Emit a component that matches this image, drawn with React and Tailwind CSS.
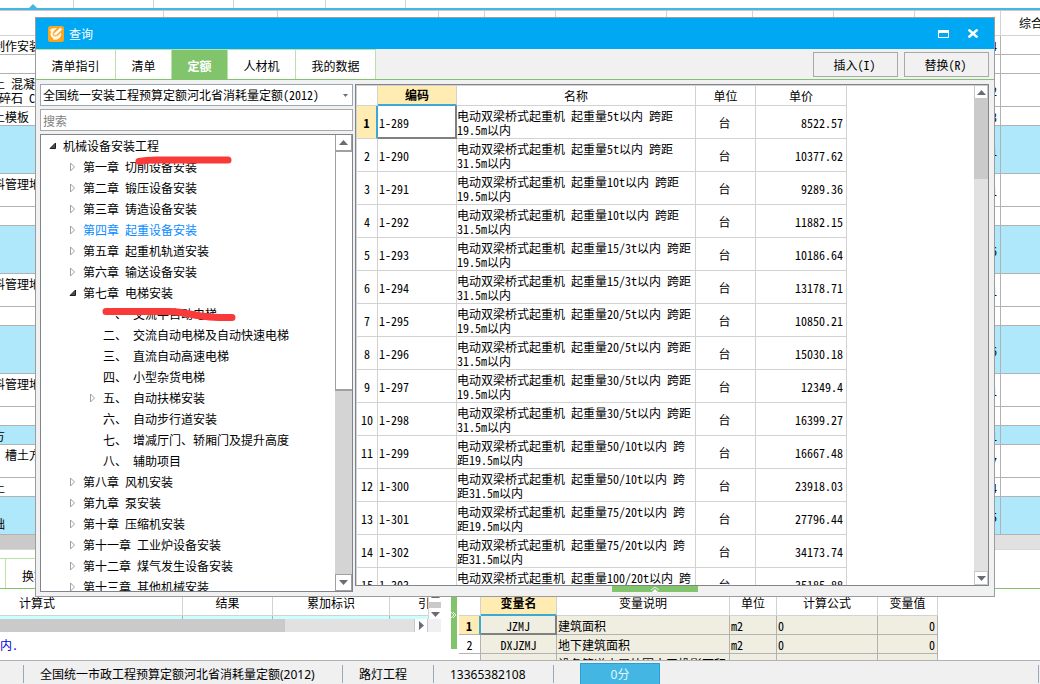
import { useState } from 'react';
import clsx from 'clsx';

const toolColumns = ['w-[74px]', 'w-20', 'w-20', 'w-[92px]', 'w-20'];

const sheetColumns = [
  'w-[164px]',
  'w-[114px]',
  'w-[161px]',
  'w-[46px]',
  'w-[71px]',
  'w-[111px]',
  'w-[86px]',
  'w-[81px]',
  'w-[81px]',
  'w-[86px]',
];

const sheetRows = [
  { height: 'h-[19px]', name: '制作安装', price: '4' },
  { height: 'h-[19px]', name: '', price: '' },
  { height: 'h-[33px]', name: '土 混凝\n 碎石 C', price: '2' },
  { height: 'h-[19px]', name: '土模板', price: '3' },
  { height: 'h-12', name: '', price: '1', marked: true },
  { height: 'h-[33px]', name: '料管理地\n ', price: '1' },
  { height: 'h-[19px]', name: '', price: '' },
  { height: 'h-12', name: '', price: '6', marked: true },
  { height: 'h-[33px]', name: '料管理地\n ', price: '1' },
  { height: 'h-[19px]', name: '', price: '' },
  { height: 'h-12', name: '', price: '6', marked: true },
  { height: 'h-[33px]', name: '料管理地\n ', price: '1' },
  { height: 'h-[19px]', name: '', price: '' },
  { height: 'h-[19px]', name: '方', price: '1', marked: true },
  { height: 'h-[33px]', name: '  槽土方\n ', price: '7' },
  { height: 'h-[19px]', name: '土', price: '4' },
  { height: 'h-[38px]', name: '\n础', price: '5', marked: true },
];

const tabs = [
  { label: '清单指引', width: 'w-20' },
  { label: '清单', width: 'w-14' },
  { label: '定额', width: 'w-14' },
  { label: '人材机', width: 'w-[68px]' },
  { label: '我的数据', width: 'w-20' },
];

const treeItems = [
  { label: '机械设备安装工程', level: 0, state: 'open' },
  { label: '第一章 切削设备安装', level: 1, state: 'closed' },
  { label: '第二章 锻压设备安装', level: 1, state: 'closed' },
  { label: '第三章 铸造设备安装', level: 1, state: 'closed' },
  { label: '第四章 起重设备安装', level: 1, state: 'closed' },
  { label: '第五章 起重机轨道安装', level: 1, state: 'closed' },
  { label: '第六章 输送设备安装', level: 1, state: 'closed' },
  { label: '第七章 电梯安装', level: 1, state: 'open' },
  { label: '一、 交流半自动电梯', level: 2 },
  { label: '二、 交流自动电梯及自动快速电梯', level: 2 },
  { label: '三、 直流自动高速电梯', level: 2 },
  { label: '四、 小型杂货电梯', level: 2 },
  { label: '五、 自动扶梯安装', level: 2, state: 'closed' },
  { label: '六、 自动步行道安装', level: 2 },
  { label: '七、 增减厅门、轿厢门及提升高度', level: 2 },
  { label: '八、 辅助项目', level: 2 },
  { label: '第八章 风机安装', level: 1, state: 'closed' },
  { label: '第九章 泵安装', level: 1, state: 'closed' },
  { label: '第十章 压缩机安装', level: 1, state: 'closed' },
  { label: '第十一章 工业炉设备安装', level: 1, state: 'closed' },
  { label: '第十二章 煤气发生设备安装', level: 1, state: 'closed' },
  { label: '第十三章 其他机械安装', level: 1, state: 'closed' },
];

const treeIndent = ['pl-2', 'pl-7', 'pl-12'];

const quotas = [
  { code: '1-289', name: '电动双梁桥式起重机 起重量5t以内 跨距\n19.5m以内', price: '8522.57' },
  { code: '1-290', name: '电动双梁桥式起重机 起重量5t以内 跨距\n31.5m以内', price: '10377.62' },
  { code: '1-291', name: '电动双梁桥式起重机 起重量10t以内 跨距\n19.5m以内', price: '9289.36' },
  { code: '1-292', name: '电动双梁桥式起重机 起重量10t以内 跨距\n31.5m以内', price: '11882.15' },
  { code: '1-293', name: '电动双梁桥式起重机 起重量15/3t以内 跨距\n19.5m以内', price: '10186.64' },
  { code: '1-294', name: '电动双梁桥式起重机 起重量15/3t以内 跨距\n31.5m以内', price: '13178.71' },
  { code: '1-295', name: '电动双梁桥式起重机 起重量20/5t以内 跨距\n19.5m以内', price: '10850.21' },
  { code: '1-296', name: '电动双梁桥式起重机 起重量20/5t以内 跨距\n31.5m以内', price: '15030.18' },
  { code: '1-297', name: '电动双梁桥式起重机 起重量30/5t以内 跨距\n19.5m以内', price: '12349.4' },
  { code: '1-298', name: '电动双梁桥式起重机 起重量30/5t以内 跨距\n31.5m以内', price: '16399.27' },
  { code: '1-299', name: '电动双梁桥式起重机 起重量50/10t以内 跨\n距19.5m以内', price: '16667.48' },
  { code: '1-300', name: '电动双梁桥式起重机 起重量50/10t以内 跨\n距31.5m以内', price: '23918.03' },
  { code: '1-301', name: '电动双梁桥式起重机 起重量75/20t以内 跨\n距19.5m以内', price: '27796.44' },
  { code: '1-302', name: '电动双梁桥式起重机 起重量75/20t以内 跨\n距31.5m以内', price: '34173.74' },
  { code: '1-303', name: '电动双梁桥式起重机 起重量100/20t以内 跨\n距19.5m以内', price: '35185.88' },
];

const variables = [
  { name: 'JZMJ', note: '建筑面积', unit: 'm2', formula: '0', value: '0' },
  { name: 'DXJZMJ', note: '地下建筑面积', unit: 'm2', formula: '0', value: '0' },
  { name: '', note: '设备管道夹层外围水平投影面积', unit: '', formula: '', value: '' },
];

function Arrow({ up, className = 'w-[9px] h-[5px]' }) {
  return (
    <svg viewBox="0 0 9 5" className={clsx('fill-[#6b6b78]', className)}>
      <path d={up ? 'M0 5 L4.5 0 L9 5 Z' : 'M0 0 L9 0 L4.5 5 Z'} />
    </svg>
  );
}

function TreeArrow({ state }) {
  if (state === 'open') {
    return (
      <svg viewBox="0 0 8 8" className="w-2 h-2">
        <path d="M6.5 1 V6.5 H1 Z" fill="#505050" stroke="#1e1e1e" />
      </svg>
    );
  }
  return (
    <svg viewBox="0 0 8 10" className="w-2 h-2.5">
      {state === 'closed' && <path d="M1.5 1 V9 L5.5 5 Z" fill="#fff" stroke="#a0a0a0" />}
    </svg>
  );
}

function AppIcon() {
  return (
    <svg viewBox="0 0 16 16" className="w-4 h-4">
      <rect width="16" height="16" rx="2.5" fill="#fba51c" />
      <path
        d="M1.5 4 Q4 1.5 9 2 L6 5 L4.5 8 L7 10.5 L10 9.5 L13 6.5 Q14 10 11 12.5 Q8 14.5 5 13.5 Q6 12.5 4 11.5 Q1.5 9 3 6 Q2.5 4.5 1.5 4 Z"
        fill="#fff6e2"
      />
      <path d="M5.5 9.8 L6 7.2 L12.2 1.4 L14.4 3.6 L8.2 9.4 Z" fill="#fff" stroke="#f5a93a" strokeWidth="0.7" />
    </svg>
  );
}

function Sheet() {
  return (
    <table className="w-full table-fixed border-separate border-spacing-0 whitespace-pre leading-[14px]">
      <colgroup>
        {sheetColumns.map((width, index) => (
          <col key={index} className={width} />
        ))}
        <col />
      </colgroup>
      <thead>
        <tr className="h-[25px]">
          {sheetColumns.map((width, index) => (
            <th key={index} className="p-0 border-r border-b border-[#d2d2d2]"></th>
          ))}
          <th className="p-0 pl-[18px] text-left font-normal border-b border-[#d2d2d2] overflow-hidden">综合单价</th>
        </tr>
      </thead>
      <tbody>
        {sheetRows.map((row, index) => (
          <tr key={index} className={clsx(row.height, row.marked && 'bg-[#aee8fa]')}>
            <td className="p-0 pt-0.5 border-b border-[#b2b2b2] overflow-hidden">
              <div className="-ml-[7px]">{row.name}</div>
            </td>
            <td colSpan={8} className="p-0 border-b border-[#b2b2b2]"></td>
            <td className="p-0 pt-0.5 pr-[3px] text-right border-r border-b border-[#b2b2b2]">{row.price}</td>
            <td className="p-0 border-b border-[#b2b2b2]"></td>
          </tr>
        ))}
      </tbody>
    </table>
  );
}

function QuotaTree() {
  const [selected, setSelected] = useState('第四章 起重设备安装');

  return (
    <div className="flex-1 min-h-0 flex bg-white border border-[#80848c]">
      <ul className="flex-1 min-w-0 overflow-hidden">
        {treeItems.map((item) => (
          <li key={item.label}>
            <button
              className={clsx(
                'w-full h-[21px] flex items-center gap-1.5 whitespace-pre',
                treeIndent[item.level],
                item.label === selected && 'text-[#0a8cff]'
              )}
              onClick={() => setSelected(item.label)}
            >
              <TreeArrow state={item.state} />
              {item.label}
            </button>
          </li>
        ))}
      </ul>
      <div className="w-[17px] flex flex-col bg-[#d4d4d4]">
        <div className="h-[17px] flex items-center justify-center bg-white border border-t-0 border-b-2 border-[#a0a0a0]">
          <Arrow up />
        </div>
        <div className="h-[239px] bg-white border-l border-b-2 border-[#a0a0a0]"></div>
        <div className="h-[17px] mt-auto flex items-center justify-center bg-white border border-[#a0a0a0]">
          <Arrow />
        </div>
      </div>
    </div>
  );
}

function QuotaTable() {
  const head = 'p-0 font-normal border-r border-b border-[#d2d2d2]';
  const cell = 'p-0 pt-0.5 border-r border-b border-[#d2d2d2]';

  return (
    <div className="flex-1 min-w-0 h-[501px] flex bg-white border border-[#80848c]">
      <div className="flex-1 min-w-0 overflow-hidden border-t border-l border-[#d2d2d2]">
        <table className="w-[490px] table-fixed border-separate border-spacing-0 whitespace-pre leading-[14px]">
          <colgroup>
            <col className="w-[21px]" />
            <col className="w-[79px]" />
            <col className="w-[239px]" />
            <col className="w-[60px]" />
            <col className="w-[91px]" />
          </colgroup>
          <thead>
            <tr className="h-5">
              <th className={head}></th>
              <th className="p-0 bg-[#ffecb2] border-r border-r-[#d2d2d2] border-b-2 border-b-[#3ea8d4]">编码</th>
              <th className={head}>名称</th>
              <th className={head}>单位</th>
              <th className={head}>单价</th>
            </tr>
          </thead>
          <tbody>
            {quotas.map((quota, index) => (
              <tr key={quota.code} className="h-[33px]">
                {index === 0 ? (
                  <>
                    <td className="p-0 pt-0.5 text-center font-bold bg-[#ffecb2] border-r-2 border-b border-r-[#3ea8d4] border-b-[#d2d2d2]">
                      1
                    </td>
                    <td className="p-0 pt-0.5 pl-px border-r-2 border-b-2 border-[#808080]">{quota.code}</td>
                  </>
                ) : (
                  <>
                    <td className={clsx(cell, 'text-center')}>{index + 1}</td>
                    <td className={clsx(cell, 'pl-px')}>{quota.code}</td>
                  </>
                )}
                <td className={cell}>{quota.name}</td>
                <td className={clsx(cell, 'pr-0.5 text-center')}>台</td>
                <td className={clsx(cell, 'pr-[3px] text-right')}>{quota.price}</td>
              </tr>
            ))}
          </tbody>
        </table>
      </div>
      <div className="w-3.5 flex flex-col bg-[#e1e1e1]">
        <div className="h-3.5 flex items-center justify-center bg-white border border-[#c8c8c8]">
          <Arrow up />
        </div>
        <div className="h-20 bg-[#cacaca]"></div>
        <div className="h-3.5 mt-auto flex items-center justify-center bg-white border border-[#c8c8c8]">
          <Arrow />
        </div>
      </div>
    </div>
  );
}

function QueryDialog() {
  const [active, setActive] = useState('定额');

  return (
    <section className="absolute left-[35px] right-[45px] top-[17px] h-[580px] flex flex-col bg-[#f1f1f1] border border-[#9c9c9c]">
      <header className="h-[31px] pl-3 pr-[15px] flex items-center bg-[#00a8f3] text-white">
        <AppIcon />
        <h1 className="ml-[5px]">查询</h1>
        <button className="ml-auto" aria-label="最大化">
          <svg viewBox="0 0 11 8" className="w-[11px] h-2">
            <path d="M0.5 0 V7.5 H10.5 V0" fill="none" stroke="#fff" />
            <path d="M0 0 H11 V3 H0 Z" fill="#fff" />
          </svg>
        </button>
        <button className="ml-[18px]" aria-label="关闭">
          <svg viewBox="0 0 12 9" className="w-3 h-[9px]">
            <path d="M1.5 0.5 L10.5 8.5 M10.5 0.5 L1.5 8.5" stroke="#fff" strokeWidth="2.4" />
          </svg>
        </button>
      </header>

      <div className="h-[31px] flex border-b border-[#82c46c]">
        <nav className="flex bg-white border-t border-[#b8e2a6]">
          {tabs.map((tab) => (
            <button
              key={tab.label}
              className={clsx(
                'pt-0.5 border-r border-[#b8e2a6]',
                tab.width,
                tab.label === active && 'bg-[#82c46c] text-white font-bold'
              )}
              onClick={() => setActive(tab.label)}
            >
              {tab.label}
            </button>
          ))}
        </nav>
        <div className="ml-auto pt-[3px] pr-[5px] flex items-start gap-1.5">
          <button className="w-[85px] h-[25px] pr-0.5 border border-[#a8a8a8]">插入(I)</button>
          <button className="w-[85px] h-[25px] pr-0.5 border border-[#a8a8a8]">替换(R)</button>
        </div>
      </div>

      <div className="flex-1 min-h-0 pt-1 pl-1 pr-[5px] pb-1 flex gap-0.5">
        <div className="w-[313px] flex flex-col gap-[3px]">
          <div className="relative">
            <select
              aria-label="定额库"
              className="w-full h-[22px] pl-0.5 appearance-none bg-white border border-[#98a8b4]"
            >
              <option>全国统一安装工程预算定额河北省消耗量定额(2012)</option>
            </select>
            <Arrow className="absolute right-[5px] top-2.5 w-[5px] h-[3px]" />
          </div>
          <input
            type="text"
            aria-label="搜索"
            placeholder="搜索"
            className="w-full h-[22px] pl-0.5 bg-white border border-[#a8a8a8] placeholder:text-[#808080]"
          />
          <QuotaTree />
        </div>
        <div className="flex-1 min-w-0 flex flex-col">
          <QuotaTable />
          <button
            className="w-[86px] h-1.5 ml-[257px] flex items-center justify-center bg-[#82c46c]"
            aria-label="展开"
          >
            <svg viewBox="0 0 10 6" className="w-2.5 h-1.5">
              <path d="M1 4 L5 1 L9 4" fill="none" stroke="#e6f5e0" />
              <path d="M2 6 L5 3 L8 6 Z" fill="#fff" />
            </svg>
          </button>
        </div>
      </div>

      {/* hand-drawn marker strokes */}
      <svg
        viewBox="0 0 300 320"
        className="absolute left-0 top-0 w-[300px] h-80 pointer-events-none"
        fill="none"
        stroke="#f93a38"
        strokeWidth="7"
        strokeLinecap="round"
      >
        <path d="M103 143.5 Q110 142 120 142 H192" />
        <path d="M70 293.5 H134 C150 294 158 298 170 298.5 C180 300 190 299.5 196 299.5" />
      </svg>
    </section>
  );
}

function CalculationPanel() {
  const head = 'p-0 pt-0.5 font-normal border-r border-b border-[#d2d2d2]';

  return (
    <div className="w-[441px] flex flex-col">
      <div className="h-[30px] flex">
        <table className="w-[428px] table-fixed border-separate border-spacing-0">
          <colgroup>
            <col className="w-[183px]" />
            <col className="w-[90px]" />
            <col className="w-[117px]" />
            <col className="w-[38px]" />
          </colgroup>
          <thead>
            <tr className="h-[27px]">
              <th className={clsx(head, 'pl-[19px] text-left')}>计算式</th>
              <th className={head}>结果</th>
              <th className={head}>累加标识</th>
              <th className="p-0 pt-0.5 pl-7 text-left font-normal whitespace-nowrap overflow-hidden border-b border-[#d2d2d2]">
                引用
              </th>
            </tr>
          </thead>
          <tbody>
            <tr className="h-[3px] bg-[#ccffff]">
              <td className="p-0 border-r border-[#b2b2b2]"></td>
              <td className="p-0 border-r border-[#b2b2b2]"></td>
              <td className="p-0 border-r border-[#b2b2b2]"></td>
              <td className="p-0"></td>
            </tr>
          </tbody>
        </table>
        <div className="w-[13px] pb-0.5 flex flex-col items-center justify-end gap-1 bg-white border-l border-[#d2d2d2]">
          <Arrow up />
          <div className="w-full h-1.5 bg-[#cacaca]"></div>
          <Arrow />
        </div>
      </div>
      <div className="h-[13px] flex bg-[#e1e1e1]">
        <div className="w-[285px] bg-[#cacaca]"></div>
        <div className="w-3.5 ml-auto flex items-center justify-center bg-white border-x border-[#c8c8c8]">
          <svg viewBox="0 0 5 9" className="w-[5px] h-[9px] fill-[#6b6b78]">
            <path d="M0 0 L5 4.5 L0 9 Z" />
          </svg>
        </div>
        <div className="w-[13px] bg-[#f0f0f0]"></div>
      </div>
      <p className="pt-1.5 leading-[14px] text-[#0000e0]">内.</p>
    </div>
  );
}

function VariableTable() {
  const head = 'p-0 pt-0.5 font-normal border-r border-b border-[#d2d2d2]';
  const cell = 'p-0 pt-0.5 border-r border-b border-[#b2b2b2] bg-[#f0eee0]';

  return (
    <table className="w-[479px] table-fixed border-separate border-spacing-0 leading-[14px] whitespace-nowrap">
      <colgroup>
        <col className="w-[22px]" />
        <col className="w-[76px]" />
        <col className="w-[173px]" />
        <col className="w-[47px]" />
        <col className="w-[101px]" />
        <col className="w-[60px]" />
      </colgroup>
      <thead>
        <tr className="h-[27px]">
          <th className={head}></th>
          <th className="p-0 pt-0.5 bg-[#ffecb2] border-r border-r-[#d2d2d2] border-b-2 border-b-[#3ea8d4]">变量名</th>
          <th className={head}>变量说明</th>
          <th className={head}>单位</th>
          <th className={head}>计算公式</th>
          <th className={head}>变量值</th>
        </tr>
      </thead>
      <tbody>
        {variables.map((item, index) => (
          <tr key={item.note} className="h-[19px]">
            <td
              className={clsx(
                'p-0 pt-0.5 text-center',
                index === 0
                  ? 'font-bold bg-[#ffecb2] border-r-2 border-b border-r-[#3ea8d4] border-b-[#b2b2b2]'
                  : 'bg-white border-r border-b border-[#b2b2b2]'
              )}
            >
              {item.name && index + 1}
            </td>
            <td
              className={clsx(
                'p-0 pt-0.5 text-center bg-[#f0eee0]',
                index === 0 ? 'border-r-2 border-b-2 border-[#808080]' : 'border-r border-b border-[#b2b2b2]'
              )}
            >
              {item.name}
            </td>
            <td className={clsx(cell, 'pl-px')}>{item.note}</td>
            <td className={clsx(cell, 'pl-px')}>{item.unit}</td>
            <td className={clsx(cell, 'pl-px')}>{item.formula}</td>
            <td className={clsx(cell, 'pr-0.5 text-right')}>{item.value}</td>
          </tr>
        ))}
      </tbody>
    </table>
  );
}

function StatusBar() {
  return (
    <footer className="h-6 pt-0.5 pl-[23px] pr-px flex items-center bg-[#f0f0f0] border-t border-[#b2b2b2] font-['Noto_Sans','Noto_Sans_CJK_SC',sans-serif] whitespace-nowrap">
      <span className="w-[319px] h-[18px] pl-4 leading-5 border-l border-[#98a8bc]">
        全国统一市政工程预算定额河北省消耗量定额(2012)
      </span>
      <span className="w-[91px] h-[18px] pl-4 leading-5 border-l border-[#98a8bc]">路灯工程</span>
      <span className="w-[120px] h-[18px] pl-4 leading-5 border-l border-[#98a8bc]">13365382108</span>
      <span className="w-[27px] h-[18px] border-l border-[#98a8bc]"></span>
      <button className="w-20 h-[21px] pt-0.5 bg-[#44b6e4] border border-b-0 border-[#2a9fd0] text-[#e4f6fd]">
        0分
      </button>
      <span className="ml-auto h-[18px] border-l border-[#98a8bc]"></span>
    </footer>
  );
}

export default function App() {
  return (
    <main className="relative h-screen flex flex-col overflow-hidden bg-white text-black text-xs font-['Noto_Sans_Mono_CJK_SC','Noto_Sans_CJK_SC',sans-serif]">
      <div className="relative h-2 flex">
        {toolColumns.map((width, index) => (
          <div key={index} className={clsx('border-r border-[#d2d2d2]', width)}></div>
        ))}
        <svg viewBox="0 0 8 4" className="absolute left-[29px] bottom-0 w-2 h-1 fill-[#44b6e4]">
          <path d="M0 4 L4 0 L8 4 Z" />
        </svg>
      </div>
      <div className="h-[3px] bg-[#44b6e4] border-b border-[#c8c8c8]"></div>

      <Sheet />
      <div className="h-[15px] flex bg-[#e1e1e1] border-b border-[#d8d8d8]">
        <div className="w-1/2 bg-[#cacaca]"></div>
      </div>

      <div className="h-[39px] pt-2 flex border-b border-[#82c46c]">
        <div className="w-1.5 border-t border-r border-[#b8e2a6]"></div>
        <button className="w-20 pl-4 pt-1 text-left border-t border-[#b8e2a6]">换算信息</button>
      </div>

      <div className="flex-1 min-h-0 flex overflow-hidden">
        <CalculationPanel />
        <button className="w-1.5 h-[60px] ml-2.5 mr-0.5 pb-2 flex items-center bg-[#82c46c]" aria-label="收起">
          <svg viewBox="0 0 6 8" className="w-1.5 h-2">
            <path d="M0 1 L3 4 L0 7 M2 1 L5 4 L2 7" fill="none" stroke="#e6f5e0" />
          </svg>
        </button>
        <VariableTable />
      </div>

      <StatusBar />
      <QueryDialog />
    </main>
  );
}
